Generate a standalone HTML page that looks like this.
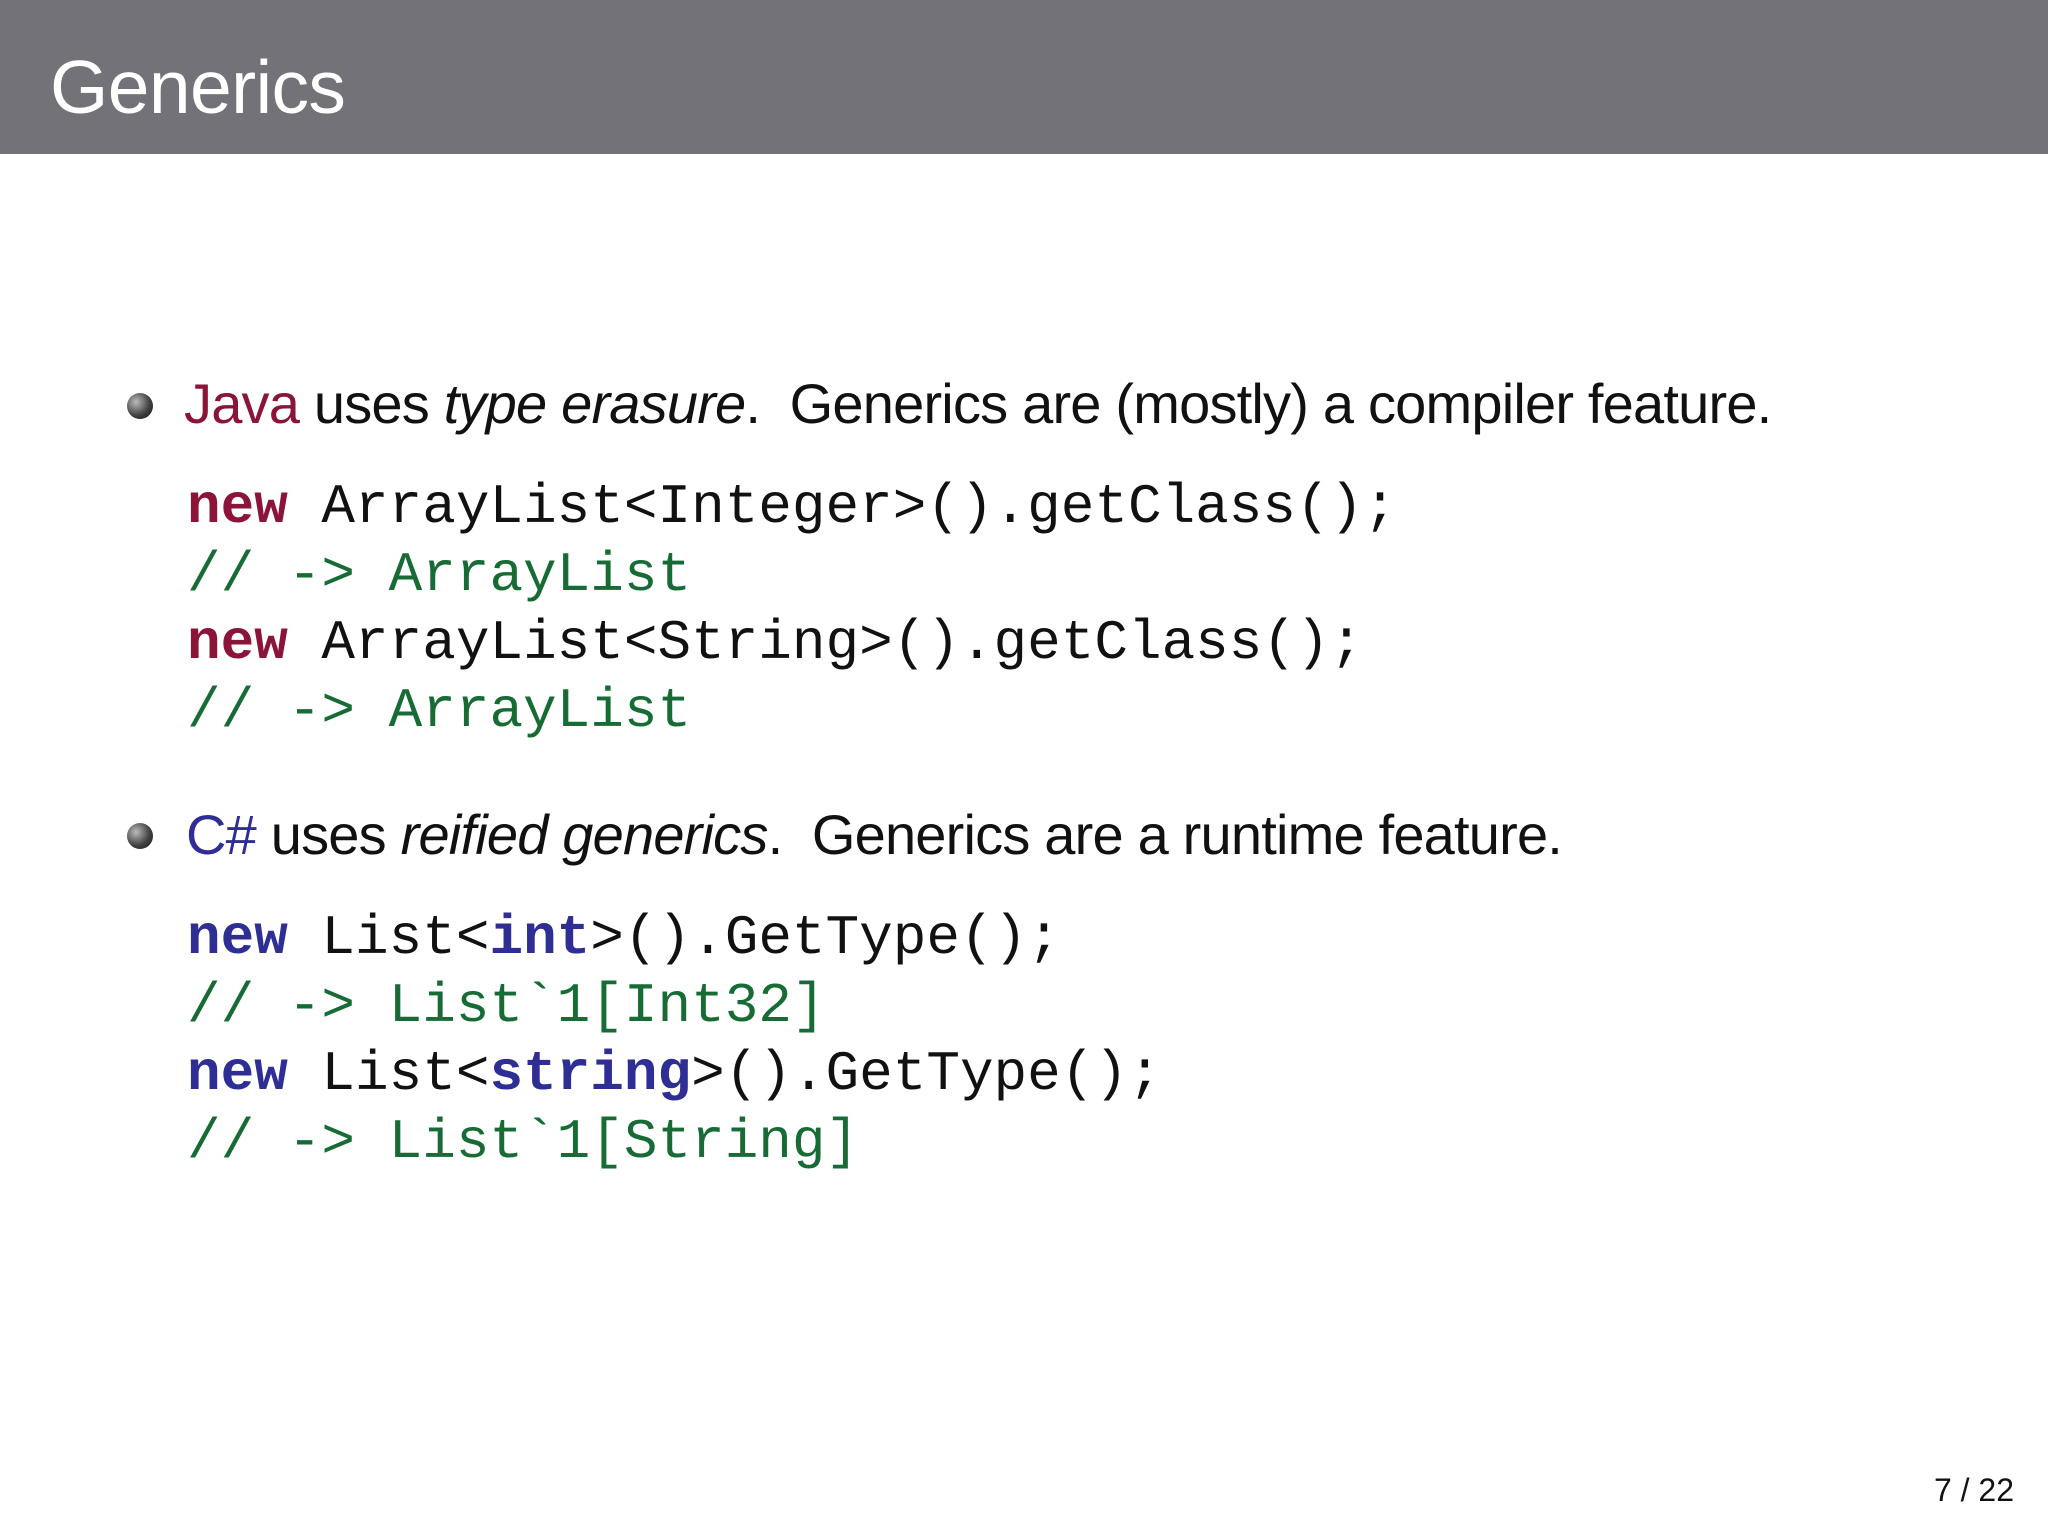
<!DOCTYPE html>
<html><head><meta charset="utf-8"><style>
body{margin:0;width:2048px;height:1536px;background:#fff;position:relative;overflow:hidden;font-family:"Liberation Sans",sans-serif}
.hdr{position:absolute;left:0;top:0;width:2048px;height:154px;background:#737278}
.t{position:absolute;line-height:1;white-space:pre}
.title{left:50px;top:50px;font-size:75px;color:#fff;letter-spacing:-0.6px}
.txt{font-size:56px;color:#111;letter-spacing:-0.8px}
.code{font-family:"Liberation Mono",monospace;font-size:56px;left:187px;color:#111}
.kj{color:#8b1538;font-weight:bold}.kc{color:#2e2e94;font-weight:bold}.g{color:#176b34}
.b{position:absolute;width:26px;height:26px;border-radius:50%;background:radial-gradient(circle at 35% 35%,#bbb,#444 55%,#111)}
</style></head><body>
<div class="hdr"></div>
<div class="t title">Generics</div>
<div class="b" style="left:127px;top:393px"></div>
<div class="t txt" style="left:184px;top:376px"><span style="color:#8b1538">Java</span> uses <i>type erasure</i>.  Generics are (mostly) a compiler feature.</div>
<div class="t code" style="top:479px"><span class="kj">new</span> ArrayList&lt;Integer&gt;().getClass();</div>
<div class="t code g" style="top:547px">// -&gt; ArrayList</div>
<div class="t code" style="top:615px"><span class="kj">new</span> ArrayList&lt;String&gt;().getClass();</div>
<div class="t code g" style="top:683px">// -&gt; ArrayList</div>
<div class="b" style="left:127px;top:823px"></div>
<div class="t txt" style="left:186px;top:807px"><span style="color:#2e2e94">C#</span> uses <i>reified generics</i>.  Generics are a runtime feature.</div>
<div class="t code" style="top:910px"><span class="kc">new</span> List&lt;<span class="kc">int</span>&gt;().GetType();</div>
<div class="t code g" style="top:978px">// -&gt; List`1[Int32]</div>
<div class="t code" style="top:1046px"><span class="kc">new</span> List&lt;<span class="kc">string</span>&gt;().GetType();</div>
<div class="t code g" style="top:1114px">// -&gt; List`1[String]</div>
<div class="t" style="right:34px;top:1474px;font-size:32px;color:#111">7 / 22</div>
</body></html>
